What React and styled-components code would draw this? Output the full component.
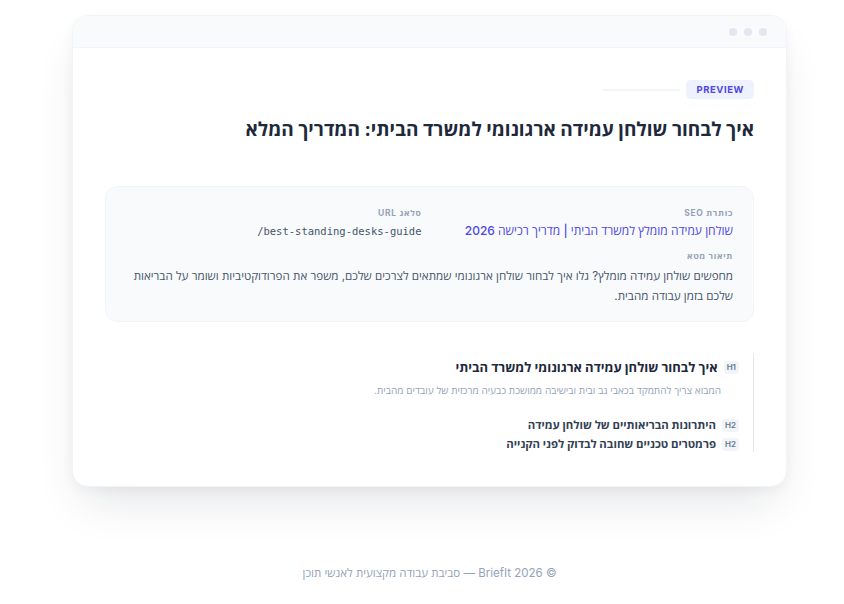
import React from 'react';
import styled, { createGlobalStyle } from 'styled-components';

const GlobalStyle = createGlobalStyle`
  * { box-sizing: border-box; }
  body {
    margin: 0;
    background: #ffffff;
    font-family: "Inter", "Open Sans", "Liberation Sans", sans-serif;
    color: #1e293b;
  }
`;

const Page = styled.div`
  min-height: 604px;
  padding: 15px 57px 0 72px;
  display: flex;
  flex-direction: column;
  align-items: stretch;
`;

const Window = styled.div`
  background: #ffffff;
  border: 1px solid #f1f5f9;
  border-radius: 16px;
  overflow: hidden;
  box-shadow: 0 24px 48px -12px rgba(15, 23, 42, 0.12), 0 4px 12px rgba(15, 23, 42, 0.04);
`;

const TitleBar = styled.div`
  height: 32px;
  background: #f8fafc;
  border-bottom: 1px solid #f1f5f9;
  display: flex;
  align-items: center;
  justify-content: flex-end;
  gap: 7px;
  padding: 0 19px;
`;

const Dot = styled.span`
  width: 8px;
  height: 8px;
  border-radius: 50%;
  background: #e2e8f0;
`;

const Body = styled.div`
  direction: rtl;
  padding: 32px 32px 34px;
`;

const BadgeRow = styled.div`
  display: flex;
  align-items: center;
  gap: 6px;
`;

const PreviewBadge = styled.span`
  font-family: "Inter", sans-serif;
  font-size: 9.5px;
  font-weight: 700;
  letter-spacing: 0.06em;
  color: #4f46e5;
  background: #eef2ff;
  border-radius: 5px;
  padding: 4px 10px;
  line-height: 11px;
`;

const Rule = styled.span`
  width: 77px;
  height: 2px;
  border-radius: 1px;
  background: #f1f5f9;
`;

const Title = styled.h1`
  margin: 16px 0 0;
  font-size: 19px;
  line-height: 30px;
  font-weight: 700;
  color: #1e293b;
`;

const SeoBox = styled.div`
  margin-top: 41px;
  background: #f8fafc;
  border: 1px solid #f1f5f9;
  border-radius: 12px;
  padding: 20px 20px 15px;
  display: grid;
  grid-template-columns: 1fr 1fr;
  column-gap: 16px;
  row-gap: 11px;
`;

const Field = styled.div`
  grid-column: ${(p) => (p.$wide ? '1 / -1' : 'auto')};
  display: flex;
  flex-direction: column;
  gap: 4px;
`;

const Label = styled.span`
  font-size: 8.5px;
  font-weight: 700;
  letter-spacing: 0.08em;
  line-height: 12px;
  color: #94a3b8;
`;

const SeoTitle = styled.span`
  font-size: 12px;
  line-height: 16px;
  font-weight: 500;
  color: #4f46e5;
`;

const Slug = styled.span`
  direction: ltr;
  text-align: right;
  font-family: "DejaVu Sans Mono", "Liberation Mono", monospace;
  font-size: 10.5px;
  line-height: 16px;
  color: #475569;
`;

const Description = styled.p`
  margin: 0;
  font-size: 11.6px;
  line-height: 20px;
  color: #475569;
`;

const Outline = styled.div`
  margin-top: 32px;
  border-right: 1px solid #e2e8f0;
  padding: 3px 14px 0 0;
  display: flex;
  flex-direction: column;
`;

const HeadingRow = styled.div`
  display: flex;
  align-items: center;
  gap: 6px;
  margin-top: ${(p) => p.$top || 0}px;
`;

const Tag = styled.span`
  font-family: "Inter", sans-serif;
  font-size: 8px;
  font-weight: 600;
  color: #64748b;
  background: #f1f5f9;
  border-radius: 3px;
  padding: 2px 3px;
  line-height: 9px;
`;

const HeadingText = styled.span`
  font-size: ${(p) => (p.$level === 1 ? 13 : 11.4)}px;
  line-height: ${(p) => (p.$level === 1 ? 20 : 16)}px;
  font-weight: 700;
  color: ${(p) => (p.$level === 1 ? '#1e293b' : '#334155')};
`;

const Intro = styled.p`
  margin: 6px 18px 0 0;
  font-size: 10px;
  line-height: 14px;
  color: #94a3b8;
`;

const Footer = styled.footer`
  direction: rtl;
  margin-top: 78px;
  text-align: center;
  font-size: 11.5px;
  color: #94a3b8;
`;

const headings = [
  { level: 2, text: 'היתרונות הבריאותיים של שולחן עמידה', top: 20 },
  { level: 2, text: 'פרמטרים טכניים שחובה לבדוק לפני הקנייה', top: 3 },
];

export default function App() {
  return (
    <>
      <GlobalStyle />
      <Page>
        <Window>
          <TitleBar>
            <Dot />
            <Dot />
            <Dot />
          </TitleBar>
          <Body>
            <BadgeRow>
              <PreviewBadge>PREVIEW</PreviewBadge>
              <Rule />
            </BadgeRow>
            <Title>איך לבחור שולחן עמידה ארגונומי למשרד הביתי: המדריך המלא</Title>

            <SeoBox>
              <Field>
                <Label>כותרת SEO</Label>
                <SeoTitle>שולחן עמידה מומלץ למשרד הביתי | מדריך רכישה 2026</SeoTitle>
              </Field>
              <Field>
                <Label>סלאג URL</Label>
                <Slug>/best-standing-desks-guide</Slug>
              </Field>
              <Field $wide>
                <Label>תיאור מטא</Label>
                <Description>
                  מחפשים שולחן עמידה מומלץ? גלו איך לבחור שולחן ארגונומי שמתאים לצרכים שלכם, משפר את
                  הפרודוקטיביות ושומר על הבריאות שלכם בזמן עבודה מהבית.
                </Description>
              </Field>
            </SeoBox>

            <Outline>
              <HeadingRow>
                <Tag>H1</Tag>
                <HeadingText $level={1}>איך לבחור שולחן עמידה ארגונומי למשרד הביתי</HeadingText>
              </HeadingRow>
              <Intro>המבוא צריך להתמקד בכאבי גב ובית ובישיבה ממושכת כבעיה מרכזית של עובדים מהבית.</Intro>
              {headings.map((h) => (
                <HeadingRow key={h.text} $top={h.top}>
                  <Tag>H2</Tag>
                  <HeadingText $level={h.level}>{h.text}</HeadingText>
                </HeadingRow>
              ))}
            </Outline>
          </Body>
        </Window>
        <Footer>© 2026 BriefIt — סביבת עבודה מקצועית לאנשי תוכן</Footer>
      </Page>
    </>
  );
}
